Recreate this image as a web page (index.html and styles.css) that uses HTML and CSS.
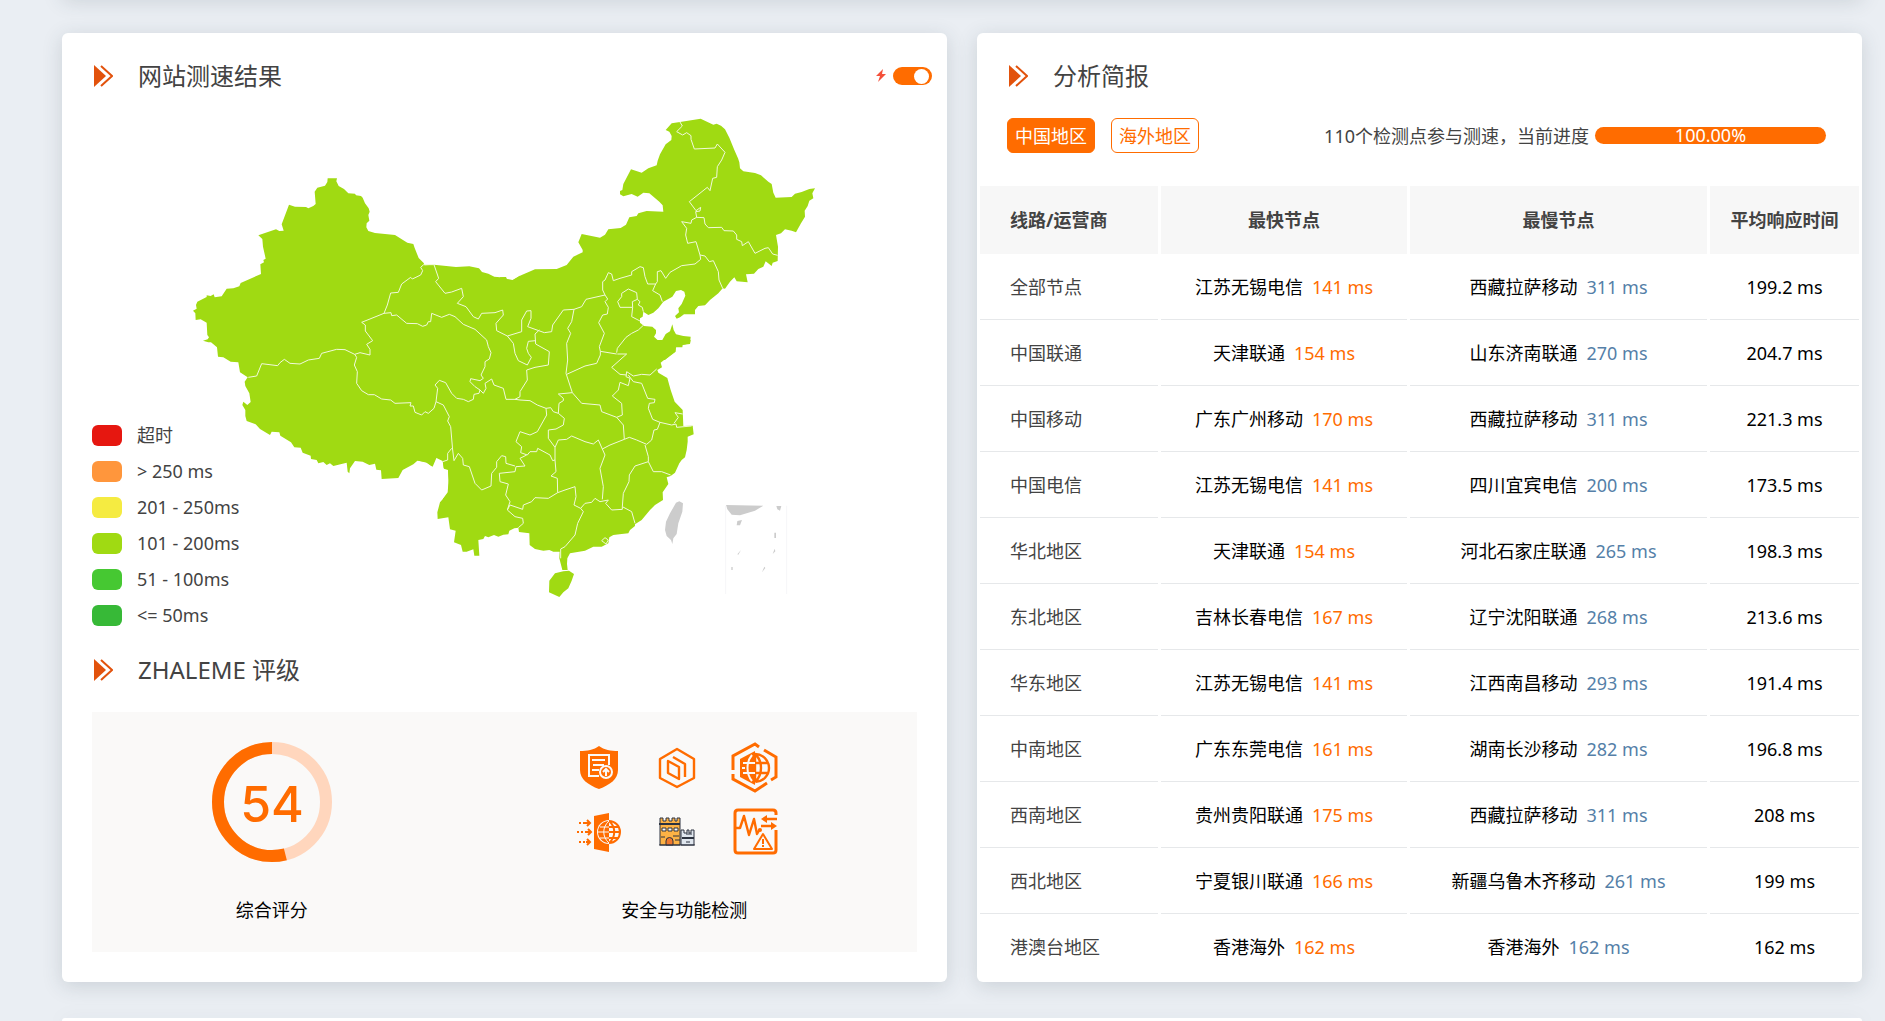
FILE: index.html
```
<!DOCTYPE html>
<html lang="zh-CN">
<head>
  <meta charset="UTF-8" />
  <meta name="viewport" content="width=device-width, initial-scale=1.0"/>
  <title>网站测速</title>
  <link rel="stylesheet" href="styles.css">
</head>
<body>
  <svg class="defs" aria-hidden="true">
    <symbol id="arrow" viewBox="0 0 20 24">
      <path fill="#e2520c" d="M1 1v22l12-11z"/>
      <path fill="none" stroke="#e2520c" stroke-width="2" d="M8 2l11 10L8 22"/>
    </symbol>
  </svg>

  <main class="page">
    <section class="card card-prev"></section>

    <div class="row">
      <section class="card">
        <div class="card-head">
          <svg class="arrow"><use href="#arrow"/></svg>
          <h2>网站测速结果</h2>
          <label class="switch">
            <svg class="bolt" viewBox="0 0 10 13" role="img" aria-label="快速模式"><path fill="#f4503a" d="M7 0L0 7h4l-2 6 8-8H6z"/></svg>
            <input type="checkbox" checked>
          </label>
        </div>

        <div class="map-box">
          <svg class="map" viewBox="276 354 2475 1527">
            <!-- west -->
            <g transform="translate(540 480)">
              <path class="land" d="M1020 347L998 360 980 357 978 351 960 352 943 350 925 341 906 336 897 325 868 319 828 321 762 314 734 316 731 309 716 294 704 264 700 252 682 248 645 225 585 219 565 213 559 202 560 190 568 182 565 165 569 155 566 145 555 130 548 113 543 108 528 106 525 101 505 100 492 87 476 78 472 70 469 64 471 55 443 55 442 66 435 77 412 83 404 95 407 132 400 138 385 145 378 141 345 140 327 134 305 193 311 212 298 213 288 208 235 226 247 237 249 260 257 296 250 300 252 307 241 313 243 342 182 369 178 379 160 385 140 386 125 409 104 412 101 403 92 408 80 406 80 411 52 425 48 435 50 446 39 452 46 460 47 480 62 478 80 488 82 525 87 532 83 538 69 542 85 547 93 547 111 562 114 590 130 592 152 605 175 607 180 637 203 652 194 665 196 678 208 700 212 726 202 735 190 725 187 735 196 750 196 768 200 783 227 793 240 807 270 825 275 815 298 817 301 827 333 847 343 862 362 863 368 878 392 887 393 897 410 900 415 910 430 906 440 915 450 910 460 918 500 908 503 935 508 940 510 925 525 903 548 905 568 915 585 911 589 929 603 931 605 957 655 954 668 930 700 913 712 902 738 906 755 919 768 893 788 903 791 925 804 927 806 960 803 997 788 1018 1020 1020z"/>
            </g>
            <!-- north east -->
            <g transform="translate(1500 300)">
              <path class="land" d="M0 532L18 532 20 538 38 541 60 527 105 508 170 507 200 495 220 470 248 457 248 450 235 427 245 402 300 413 315 404 325 388 362 384 378 374 388 352 410 348 415 340 440 333 490 335 488 316 478 305 448 280 430 278 413 290 395 282 370 289 360 283 360 273 367 270 370 252 393 208 425 218 445 205 470 196 473 182 480 163 497 133 514 120 515 108 508 95 497 90 515 70 540 66 602 56 640 74 650 71 663 77 675 88 688 113 703 150 714 175 718 187 720 205 730 214 765 219 783 226 805 245 815 252 820 278 827 293 875 291 885 281 905 276 928 267 945 265 937 280 940 295 928 302 923 318 914 332 915 350 903 370 888 397 875 392 855 388 843 400 828 405 834 440 833 483 818 488 815 498 797 484 790 500 775 507 762 521 738 523 743 547 710 544 703 532 690 545 675 566 668 565 655 580 630 600 615 616 595 618 585 630 585 643 552 643 540 652 530 656 525 648 537 637 535 625 545 612 556 587 553 575 543 570 528 573 517 590 490 605 475 625 460 638 445 645 430 635 428 650 420 655 420 668 432 678 457 680 468 690 468 700 462 710 475 722 487 720 497 702 510 694 517 673 521 690 528 703 550 708 572 710 570 730 548 735 547 742 527 742 525 755 512 765 495 780 0 780z"/>
            </g>
            <!-- south and islands -->
            <g transform="translate(1260 1020)">
              <path class="land" d="M0 0L812 0 810 12 790 14 768 22 767 35 745 52 735 58 722 68 726 82 712 90 715 98 742 114 752 150 764 185 788 210 790 258 818 257 821 283 803 290 803 305 800 330 795 352 785 360 778 370 765 398 752 408 740 412 745 432 728 457 729 480 705 495 690 510 665 540 645 553 645 558 630 570 625 580 605 582 580 585 568 592 565 610 545 620 520 620 495 632 450 640 442 655 441 672 443 690 427 690 418 655 419 635 400 635 388 630 370 632 345 627 329 615 328 580 297 576 295 563 283 565 268 572 265 583 250 584 235 590 222 585 205 592 195 588 190 597 175 600 178 647 163 647 160 628 140 635 128 635 123 615 102 607 107 572 90 568 85 532 53 537 52 517 60 487 84 460 86 430 84 390 72 386 68 360 50 352 38 380 20 368 0 363z"/>
              <path class="land" d="M405 700L430 694 447 692 462 702 455 722 445 745 430 757 418 771 387 757 388 722z"/>
              <path class="sea" d="M778 484L789 490 787 515 775 550 770 582 760 595 757 612 753 600 740 588 735 570 738 545 750 520 768 488z"/>
              <path class="sea" d="M918 495L1030 497 1005 512 960 526 935 524 922 508zM1069 498L1084 498 1080 512 1072 508zM952 543L966 540 960 556 950 556zM1063 578h5v16h-5zM1064 626L1066 634 1058 642zM1033 680L1036 684 1026 697zM934 681h4v9h-4zM963 630L955 644 952 643z"/>
              <path class="inset" d="M917 497V762M1100 497V762"/>
            </g>

            <g class="border" transform="translate(540 480)">
              <path d="M731 314L722 322 728 332 722 345 697 357 692 352 665 372 655 397 632 399 622 435 612 460 545 487 556 495 556 513 578 542 560 553 570 568 570 585 540 578 524 583 495 569 470 568 425 580 418 595 385 600 360 612 330 610 313 598 300 608 293 617 245 611 230 648 205 652"/>
              <path d="M524 583L530 592 523 615 532 635 530 670 545 692 565 704 583 704 605 717 632 720 645 730 693 728 690 738 700 738 705 757 725 765 735 755 745 760 762 745 768 725 790 735 808 770 803 783 812 800 818 870 822 902"/>
              <path d="M612 460L633 458 635 467 650 465 680 490 712 491 728 499 740 495 745 485 752 485 755 460 785 472 808 463 825 470 850 493 885 508 920 540 925 560 933 578 928 597 915 605 915 620 903 645 910 655 900 662 872 656 870 665 885 680 900 690 897 700 882 703 880 718 865 725 850 718 830 715 815 700 797 668 778 661 765 675 773 685 768 725"/>
              <path d="M731 314L762 314 776 355 767 365 795 400 815 396 845 385 850 410 832 430 858 440 880 470 895 477 905 460 945 458 968 450 970 465 948 490 950 512 982 528"/>
              <path d="M900 690L910 700 918 685 915 670 935 657 942 675 970 685 978 718 1005 718"/>
              <path d="M788 905L803 900 803 880 815 865"/>
            </g>
            <g class="border" transform="translate(1500 300)">
              <path d="M540 66L547 78 530 95 548 105 560 98 573 107 573 118 583 147 645 144 652 132 675 157 665 180 652 200 650 232 638 235 630 272 622 262 568 305 588 332 602 322 600 333 587 335 590 352"/>
              <path d="M590 352L575 360 573 370 545 365 560 385 557 405 563 430 588 425 600 465"/>
              <path d="M590 352L612 353 615 372 625 383 665 382 672 392 700 393 710 405 710 418 725 425 727 437 745 425 765 460 795 445 805 443 818 462 833 466"/>
              <path d="M600 465L615 468 628 485 640 482 655 515 657 540 668 565"/>
              <path d="M600 465L602 478 585 492 545 497 510 517 497 535 483 512 472 515 472 545 467 552 458 572 480 585 487 605"/>
              <path d="M467 552L443 552 435 530 430 503 420 500 395 515 395 525 360 535 340 542 335 522 325 518 315 540 308 545 308 570 315 585 258 598 245 620 222 628 190 630 158 675 155 695 133 698 83 680 93 655 93 632 80 633 65 660 65 695 22 708"/>
              <path d="M22 708L40 730 45 760M118 690L105 702 107 732M107 722L85 724 80 745 85 760"/>
              <path d="M222 628L215 665 203 685 212 700 200 730 203 780"/>
              <path d="M315 585L323 597 315 605 325 622 322 642 308 645 296 668 313 700 298 740 301 754"/>
              <path d="M350 758L352 745 378 712 395 700 415 690 430 676"/>
              <path d="M353 605L365 590 365 580 385 567 410 578 412 598 397 605 398 622 360 622zM412 598L420 605 415 615 427 622 430 635M398 622L395 650 420 663"/>
            </g>
            <g class="border" transform="translate(1260 1020)">
              <path d="M285 178L300 170 300 155 322 120 320 90 345 82 385 75 388 35 347 12M325 40L334 52 322 75 295 62 285 40"/>
              <path d="M285 178L300 180 330 182 352 195 378 205 380 225 352 275 330 285 300 275 288 305 305 320 302 338 322 345 330 335 350 335 353 325 390 345 398 362 405 360"/>
              <path d="M378 205L392 203 400 215 415 220 433 235 430 255 408 267 385 270 385 295 405 322 405 360"/>
              <path d="M443 60L438 100 457 158 415 162 430 175 430 182 417 190 415 220"/>
              <path d="M440 103L495 78 530 70 541 45 541 34 590 42M592 42L620 42 575 82 600 103 620 105"/>
              <path d="M457 158L485 190 540 195 545 215 590 232 607 225 605 190 577 168 595 150 600 127 625 137 630 115 618 110 620 95 640 108 665 103 690 105 710 87"/>
              <path d="M590 232L610 255 613 298 570 315 547 327 535 300 520 312 495 305 455 288 440 298 415 300 405 322"/>
              <path d="M625 105L640 125 665 130 683 175 705 178 703 188 688 190 685 205 698 238 720 247 755 255 768 252 770 262 815 258M762 250L775 232 765 218 788 222"/>
              <path d="M720 247L712 268 702 270 695 300 680 313 650 300 628 292 613 298M675 315L685 350 685 365 700 395 725 395 752 405"/>
              <path d="M685 365L645 378 628 405 627 425 610 460 607 500 607 508 575 510 557 490 565 480 540 485 525 475 515 487 495 490 482 505 462 495 468 470 465 440 435 450 413 458"/>
              <path d="M547 327L555 345 540 385 550 440 547 478M405 360L408 395 393 408 412 415 413 458 385 475 345 473 335 485 310 495 308 508 270 495 262 510"/>
              <path d="M607 500L635 515 645 550M482 505L490 515 473 550 465 585 435 620 422 627 422 655"/>
              <path d="M262 510L270 485 257 465 265 432 240 425 238 400 285 395 288 380 315 378 300 355 320 345"/>
              <path d="M102 362L115 340 128 355 130 375 148 380 165 430 185 450 213 438 215 400 230 382 230 365 245 347 257 350 258 370 285 378"/>
              <path d="M262 510L285 530 308 535 310 550 295 563M545 602L555 593 565 600 558 612z"/>
            </g>
          </svg>
          <ul class="legend">
            <li><i class="c-timeout"></i>超时</li>
            <li><i class="c-250"></i>&gt; 250 ms</li>
            <li><i class="c-201"></i>201 - 250ms</li>
            <li><i class="c-101"></i>101 - 200ms</li>
            <li><i class="c-51"></i>51 - 100ms</li>
            <li><i class="c-50"></i>&lt;= 50ms</li>
          </ul>
        </div>

        <div class="card-head">
          <svg class="arrow"><use href="#arrow"/></svg>
          <h2>ZHALEME 评级</h2>
        </div>
        <div class="rating">
          <div class="rating-item">
            <svg class="gauge" viewBox="0 0 120 120">
              <circle cx="60" cy="60" r="54" fill="none" stroke="#ffd6bd" stroke-width="12"/>
              <circle cx="60" cy="60" r="54" fill="none" stroke="#ff6c00" stroke-width="12" pathLength="100" stroke-dasharray="54 100" transform="translate(120 0) scale(-1 1) rotate(-90 60 60)"/>
              <text x="60" y="80" text-anchor="middle">54</text>
            </svg>
            <p>综合评分</p>
          </div>
          <div class="rating-item">
            <div class="icons">
              <svg viewBox="0 0 48 52">
                <path fill="#ff6c00" d="M24 4c5 4 12 5 19 5v19c0 9-8 15-19 19C13 43 5 37 5 28V9c7 0 14-1 19-5z"/>
                <path fill="none" stroke="#faf9f8" stroke-width="2" d="M24 34H14V13h20v10M17 18h13M18 23h11M17 28h7"/>
                <circle cx="31" cy="30" r="6" fill="#ff6c00" stroke="#faf9f8" stroke-width="2"/>
                <path fill="none" stroke="#faf9f8" stroke-width="2" d="M31 34v-7M28 30l3-3 3 3"/>
              </svg>
              <svg viewBox="0 0 48 52">
                <path fill="none" stroke="#ff6c00" stroke-width="2.4" stroke-linejoin="round" d="M24 7l17 10v19L24 45 7 36V17zM15 19l11 6v12l-11-6zM20 15l12 7v13"/>
              </svg>
              <svg viewBox="0 0 48 52">
                <g fill="none" stroke="#ff6c00" stroke-width="3">
                  <path d="M2 28V14L24 2l4 3M33 8l12 7v20l-5 3M36 41L24 49 2 37v-5"/>
                  <path stroke-width="2.4" d="M24 12a14 14 0 0 1 0 28M24 12c8 7 8 21 0 28M24 21h13M24 31h13M24 12v28"/>
                </g>
                <path fill="#ff6c00" d="M24 9v34L9 35V17z"/>
                <path fill="none" stroke="#faf9f8" stroke-width="2" d="M24 21H12M24 31H12M21 13c-6 7-6 19 0 26M11 26h3"/>
              </svg>
              <svg viewBox="0 0 48 52">
                <path fill="#ff6c00" d="M19 11l15-3v39l-15-3z"/>
                <circle cx="34" cy="27" r="12" fill="#faf9f8"/>
                <path fill="#ff6c00" d="M34 16a11 11 0 0 0 0 22z"/>
                <path fill="none" stroke="#ff6c00" stroke-width="2" d="M34 16a11 11 0 0 1 0 22M34 22h10M34 27h11M34 33h10M34 16c7 6 7 16 0 22"/>
                <path fill="none" stroke="#faf9f8" d="M34 22H25M34 27H23M34 33H25M34 16c-7 6-7 16 0 22"/>
                <path fill="none" stroke="#ff6c00" stroke-width="2" d="M4 18h2M8 18h7M12 15l3 3-3 3M2 27h2M6 27h2M10 27h6M13 24l3 3-3 3M4 37h2M8 37h2M11 37h4M12 34l3 3-3 3"/>
              </svg>
              <svg viewBox="0 0 48 52">
                <path fill="#fdb245" stroke="#2c3340" d="M7 13h3v3h3v-3h3v3h3v-3h3v3h2v-3h3v27H7z"/>
                <path fill="#dfe6ee" stroke="#2c3340" d="M28 25h3v3h3v-3h2v3h2v-3h3v15H28z"/>
                <path fill="none" stroke="#2c3340" stroke-width="2" d="M6 19h21M29 33h12"/>
                <path fill="#faf9f8" stroke="#2c3340" d="M9 23h4v3H9zM15 23h4v3h-4zM21 23h4v3h-4z"/>
                <path fill="#f0782d" stroke="#2c3340" d="M13 40v-4a3 3 0 0 1 7 0v4z"/>
                <path fill="none" stroke="#2c3340" d="M20 31h6M33 29h6M33 37h4M8 32h4M22 35h5M6 40h36"/>
              </svg>
              <svg viewBox="0 0 48 52">
                <g fill="none" stroke="#ff6c00" stroke-width="3" stroke-linejoin="round">
                  <path d="M45 10V8q0-3-3-3H7Q4 5 4 8v37q0 3 3 3h35q3 0 3-3V25"/>
                  <path stroke-width="2.4" d="M4 23h5l4-12 5 19 5-16 3 15 3-5M33 14h13M30 21h13"/>
                  <path stroke-width="2" d="M32 29l9 15H23zM32 34v5M32 40v2"/>
                </g>
                <path fill="#ff6c00" d="M30 14l6-4v8zM46 21l-6-4v8z"/>
                <circle cx="29" cy="25" r="2" fill="#ff6c00"/>
              </svg>
            </div>
            <p>安全与功能检测</p>
          </div>
        </div>
      </section>

      <section class="card">
        <div class="card-head">
          <svg class="arrow"><use href="#arrow"/></svg>
          <h2>分析简报</h2>
        </div>
        <div class="toolbar">
          <button type="button" class="btn active">中国地区</button>
          <button type="button" class="btn">海外地区</button>
          <span class="status">110个检测点参与测速，当前进度</span>
          <div class="progress" role="progressbar" aria-label="当前进度" aria-valuenow="100">100.00%</div>
        </div>
        <table class="report">
          <colgroup>
            <col class="col-line"><col class="col-fast"><col class="col-slow"><col class="col-avg">
          </colgroup>
          <thead>
            <tr><th>线路/运营商</th><th>最快节点</th><th>最慢节点</th><th>平均响应时间</th></tr>
          </thead>
          <tbody>
            <tr><td>全部节点</td><td>江苏无锡电信<span class="fast">141 ms</span></td><td>西藏拉萨移动<span class="slow">311 ms</span></td><td>199.2 ms</td></tr>
            <tr><td>中国联通</td><td>天津联通<span class="fast">154 ms</span></td><td>山东济南联通<span class="slow">270 ms</span></td><td>204.7 ms</td></tr>
            <tr><td>中国移动</td><td>广东广州移动<span class="fast">170 ms</span></td><td>西藏拉萨移动<span class="slow">311 ms</span></td><td>221.3 ms</td></tr>
            <tr><td>中国电信</td><td>江苏无锡电信<span class="fast">141 ms</span></td><td>四川宜宾电信<span class="slow">200 ms</span></td><td>173.5 ms</td></tr>
            <tr><td>华北地区</td><td>天津联通<span class="fast">154 ms</span></td><td>河北石家庄联通<span class="slow">265 ms</span></td><td>198.3 ms</td></tr>
            <tr><td>东北地区</td><td>吉林长春电信<span class="fast">167 ms</span></td><td>辽宁沈阳联通<span class="slow">268 ms</span></td><td>213.6 ms</td></tr>
            <tr><td>华东地区</td><td>江苏无锡电信<span class="fast">141 ms</span></td><td>江西南昌移动<span class="slow">293 ms</span></td><td>191.4 ms</td></tr>
            <tr><td>中南地区</td><td>广东东莞电信<span class="fast">161 ms</span></td><td>湖南长沙移动<span class="slow">282 ms</span></td><td>196.8 ms</td></tr>
            <tr><td>西南地区</td><td>贵州贵阳联通<span class="fast">175 ms</span></td><td>西藏拉萨移动<span class="slow">311 ms</span></td><td>208 ms</td></tr>
            <tr><td>西北地区</td><td>宁夏银川联通<span class="fast">166 ms</span></td><td>新疆乌鲁木齐移动<span class="slow">261 ms</span></td><td>199 ms</td></tr>
            <tr><td>港澳台地区</td><td>香港海外<span class="fast">162 ms</span></td><td>香港海外<span class="slow">162 ms</span></td><td>162 ms</td></tr>
          </tbody>
        </table>
      </section>
    </div>

    <section class="card card-next"></section>
  </main>
</body>
</html>
```
FILE: styles.css
```
* {
  box-sizing: border-box;
}
body {
  margin: 0;
  background: #eaeef3;
  color: #434343;
  font-family: "Noto Sans", "Noto Sans CJK SC", "Microsoft YaHei", sans-serif;
  font-size: 18px;
  line-height: 24px;
}
h2, p, ul {
  margin: 0;
  padding: 0;
}
.defs {
  display: none;
}
.page {
  display: flex;
  flex-direction: column;
  height: 100vh;
  padding: 0 23px 0 62px;
  overflow: hidden;
}
.row {
  display: grid;
  grid-template-columns: 1fr 1fr;
  flex-shrink: 0;
  gap: 30px;
  margin: 36px 0;
}
.card {
  background: #fff;
  border-radius: 6px;
  box-shadow: 0 4px 20px rgba(50, 65, 80, 0.17);
}
.card-prev {
  flex-shrink: 0;
  height: 20px;
  margin-top: -23px;
}
.card-next {
  flex: 1;
  border-radius: 6px 6px 0 0;
}
.card-head {
  display: flex;
  align-items: center;
  height: 85px;
  padding: 0 15px 0 31px;
}
.card-head h2 {
  margin-left: 25px;
  font-size: 24px;
  font-weight: 400;
}
.arrow {
  width: 20px;
  height: 24px;
}

/* switch */
.switch {
  display: flex;
  align-items: center;
  gap: 7px;
  margin-left: auto;
}
.bolt {
  width: 10px;
  height: 13px;
}
.switch input {
  appearance: none;
  display: flex;
  justify-content: flex-end;
  width: 39px;
  height: 18px;
  margin: 0;
  padding: 2px 3px 1px 2px;
  border-radius: 9px;
  background: #ff6c00;
}
.switch input::before {
  content: "";
  width: 15px;
  height: 15px;
  border-radius: 50%;
  background: #fff;
}

/* map */
.map-box {
  display: grid;
  margin: 0 30px;
}
.map, .legend {
  grid-area: 1 / 1;
}
.map {
  display: block;
  width: 100%;
}
.land {
  fill: #a0da12;
}
.sea {
  fill: #ccc;
}
.inset {
  fill: none;
  stroke: #f6f6f8;
  stroke-width: 3;
}
.border {
  fill: none;
  stroke: #f1fada;
  stroke-width: 3;
}
.legend {
  align-self: end;
  margin-bottom: -6px;
  list-style: none;
}
.legend li {
  display: flex;
  align-items: center;
  height: 36px;
}
.legend i {
  width: 30px;
  height: 21px;
  margin-right: 15px;
  border-radius: 6px;
}
.c-timeout { background: #e61710; }
.c-250 { background: #ff963c; }
.c-201 { background: #f5eb41; }
.c-101 { background: #a0da12; }
.c-51 { background: #46c832; }
.c-50 { background: #37b937; }

/* rating */
.rating {
  display: grid;
  grid-template-columns: 436fr 564fr;
  margin: 0 30px 30px;
  height: 240px;
  background: #faf9f8;
  color: #000;
}
.rating-item {
  display: flex;
  flex-direction: column;
  align-items: center;
  justify-content: space-between;
  padding: 30px 0;
}
.gauge {
  width: 120px;
  height: 120px;
}
.gauge text {
  fill: #ff6c00;
  font-family: Inter, sans-serif;
  font-size: 50px;
  font-weight: 500;
}
.icons {
  display: grid;
  grid-template-columns: repeat(3, 48px);
  gap: 11px 30px;
  margin-right: 15px;
}
.icons svg {
  width: 48px;
  height: 52px;
}

/* report */
.toolbar {
  display: flex;
  align-items: center;
  margin: 0 36px 33px 30px;
}
.btn {
  height: 35px;
  margin-right: 16px;
  padding: 0 7px;
  border: 1px solid #ff6c00;
  border-radius: 6px;
  background: #fff;
  color: #ff6c00;
  font: inherit;
}
.btn.active {
  background: #ff6c00;
  color: #fff;
}
.status {
  margin-left: auto;
}
.progress {
  width: 231px;
  height: 17px;
  margin-left: 6px;
  border-radius: 9px;
  background: #ff6c00;
  color: #fff;
  line-height: 17px;
  text-align: center;
}
.report {
  width: 100%;
  table-layout: fixed;
  border-spacing: 3px 0;
}
.col-line { width: 178px; }
.col-fast { width: 246px; }
.col-slow { width: 297px; }
.col-avg { width: 149px; }
.report th {
  height: 68px;
  padding: 0;
  background: #f7f7f7;
}
.report td {
  height: 66px;
  padding: 0;
  border-bottom: 1px solid #e6e8ea;
  color: #000;
  text-align: center;
}
.report th:first-child, .report td:first-child {
  padding-left: 30px;
  color: #434343;
  text-align: left;
}
.report tr:last-child td {
  border-bottom: none;
}
.report .fast, .report .slow {
  margin-left: 9px;
  color: #ff6c00;
}
.report .slow {
  color: #557fa8;
}
```
